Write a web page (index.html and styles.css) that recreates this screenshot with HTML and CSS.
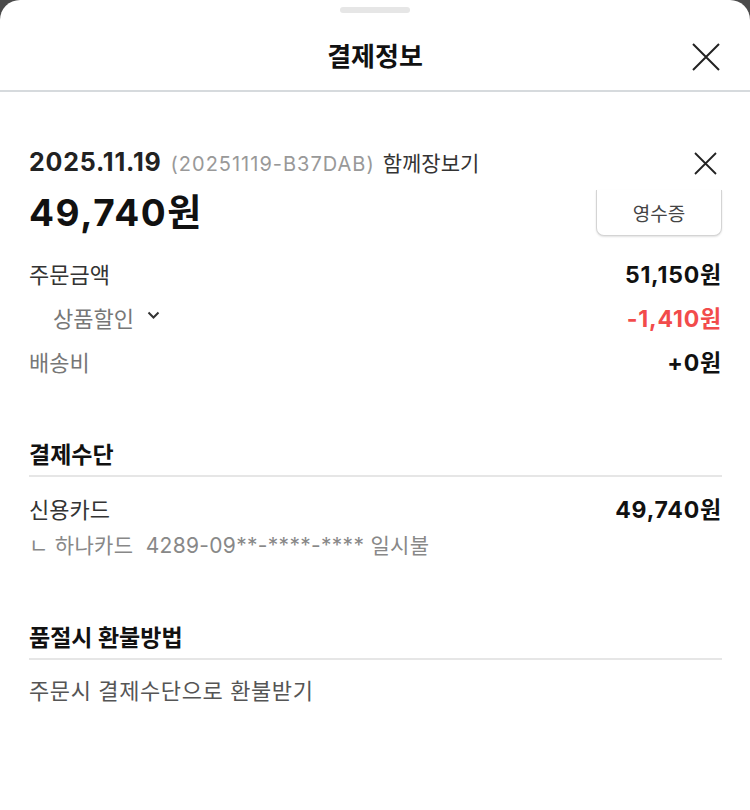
FILE: index.html
```html
<!DOCTYPE html>
<html lang="ko">
<head>
<meta charset="utf-8">
<title>결제정보</title>
<link rel="stylesheet" href="styles.css">
</head>
<body>
<div class="sheet">
  <div class="handle"></div>
  <header class="header">
    <span></span>
    <h1 class="title">결제정보</h1>
    <button class="close" aria-label="닫기">
      <svg width="28" height="28" viewBox="0 0 28 28"><path d="M1 1L27 27M27 1L1 27" stroke="#222" stroke-width="2" fill="none"/></svg>
    </button>
  </header>

  <main class="content">
    <section class="order">
      <div class="order-left">
        <div class="date-line">
          <span class="date">2025.11.19</span>
          <span class="order-no">(20251119-B37DAB)</span>
          <span class="together">함께장보기</span>
        </div>
        <div class="total">49,740원</div>
      </div>
      <div class="order-right">
        <button class="x-small" aria-label="삭제">
          <svg width="23" height="23" viewBox="0 0 23 23"><path d="M1 1L22 22M22 1L1 22" stroke="#222" stroke-width="1.8" fill="none"/></svg>
        </button>
        <button class="receipt">영수증</button>
      </div>
    </section>

    <div class="rows">
      <div class="row">
        <span class="label dark">주문금액</span>
        <span class="value">51,150원</span>
      </div>
      <div class="row">
        <span class="label sub">상품할인
          <svg class="chev" width="13" height="8" viewBox="0 0 13 8"><path d="M1.5 1.5L6.5 6.5L11.5 1.5" stroke="#333" stroke-width="2" fill="none"/></svg>
        </span>
        <span class="value red">-1,410원</span>
      </div>
      <div class="row">
        <span class="label">배송비</span>
        <span class="value">+0원</span>
      </div>
    </div>

    <section class="block">
      <h2 class="block-title">결제수단</h2>
      <div class="row pay">
        <span class="label dark">신용카드</span>
        <span class="value">49,740원</span>
      </div>
      <div class="card-info">ㄴ 하나카드&nbsp; 4289-09**-****-**** 일시불</div>
    </section>

    <section class="block refund-block">
      <h2 class="block-title">품절시 환불방법</h2>
      <div class="refund">주문시 결제수단으로 환불받기</div>
    </section>
  </main>
</div>
</body>
</html>
```

FILE: styles.css
```css
* { box-sizing: border-box; }
html, body { margin: 0; padding: 0; }
body {
  background: #4b4b4b;
  font-family: Inter, "Noto Sans CJK KR", sans-serif;
  color: #222;
}
.sheet {
  background: #fff;
  border-radius: 20px 20px 0 0;
  min-height: 810px;
  overflow: hidden;
}
.handle {
  width: 70px;
  height: 6px;
  margin: 7px auto 0;
  background: #e6e6e6;
  border-radius: 3px;
}
.header {
  height: 79px;
  padding-top: 11px;
  display: grid;
  grid-template-columns: 1fr auto 1fr;
  align-items: center;
  border-bottom: 2px solid #d6dadd;
}
.title {
  margin: 0;
  font-size: 26px;
  line-height: 34px;
  font-weight: 700;
  color: #111;
}
.close {
  justify-self: end;
  margin-right: 30px;
  background: none;
  border: 0;
  padding: 0;
  display: flex;
}
.content {
  padding: 0 28px 0 29px;
}
.order {
  display: flex;
  justify-content: space-between;
  margin-top: 55px;
}
.date-line {
  display: flex;
  align-items: baseline;
  gap: 9px;
  height: 30px;
  line-height: 30px;
}
.date {
  font-size: 25px;
  font-weight: 700;
  color: #222;
  letter-spacing: 0.8px;
}
.order-no {
  font-size: 20px;
  color: #999;
  letter-spacing: 1px;
}
.together {
  font-size: 21px;
  color: #333;
  margin-left: -1px;
}
.total {
  font-size: 37px;
  font-weight: 700;
  color: #111;
  margin-top: 12px;
  letter-spacing: 1.6px;
  line-height: 48px;
}
.order-right {
  display: flex;
  flex-direction: column;
  align-items: flex-end;
}
.x-small {
  background: none;
  border: 0;
  padding: 0;
  margin: 5px 5px 0 0;
  display: flex;
}
.receipt {
  margin-top: 15px;
  width: 126px;
  height: 46px;
  background: #fff;
  border: 1px solid #d4d4d4;
  border-top: 0;
  border-radius: 0 0 8px 8px;
  box-shadow: 0 1px 2px rgba(0,0,0,0.12);
  font-family: Inter, "Noto Sans CJK KR", sans-serif;
  font-size: 19px;
  color: #444;
  padding: 0;
}
.rows {
  margin-top: 21px;
  display: flex;
  flex-direction: column;
  gap: 14px;
}
.row {
  display: flex;
  justify-content: space-between;
  align-items: center;
  height: 30px;
}
.label {
  font-size: 22px;
  color: #777;
}
.label.dark { color: #333; }
.label.sub {
  margin-left: 24px;
  display: flex;
  align-items: center;
  gap: 13px;
}
.chev { margin-top: -4px; }
.value {
  font-size: 23px;
  font-weight: 700;
  color: #111;
  letter-spacing: 0.8px;
}
.value.red { color: #f24b4b; }
.block { margin-top: 64px; }
.refund-block { margin-top: 63px; }
.block-title {
  margin: 0;
  font-size: 23px;
  line-height: 30px;
  font-weight: 700;
  color: #111;
  padding-bottom: 5px;
  border-bottom: 2px solid #e6e6e6;
}
.row.pay { margin-top: 16px; }
.card-info {
  margin-top: 9px;
  font-size: 21px;
  line-height: 28px;
  color: #888;
  letter-spacing: 0.3px;
}
.refund {
  margin-top: 16px;
  font-size: 22px;
  line-height: 30px;
  color: #555;
  letter-spacing: 0.6px;
}
```
